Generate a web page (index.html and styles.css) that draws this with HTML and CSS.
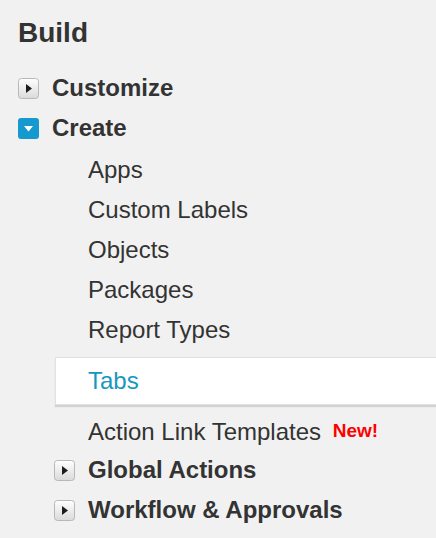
FILE: index.html
```html
<!DOCTYPE html>
<html>
<head>
<meta charset="utf-8">
<link rel="stylesheet" href="styles.css">
</head>
<body>
<div class="nav">
  <h1 class="title">Build</h1>
  <div class="group">
    <div class="head">
      <svg class="tog" viewBox="0 0 21 21" width="21" height="21"><defs><linearGradient id="g1" x1="0" y1="0" x2="0" y2="1"><stop offset="0" stop-color="#ffffff"/><stop offset="1" stop-color="#dadada"/></linearGradient></defs><rect x="0.5" y="0.5" width="20" height="20" rx="3" fill="url(#g1)" stroke="#b8b8b8"/><path d="M8 6 L14 10.5 L8 15 Z" fill="#1e1e1e"/></svg>
      <span>Customize</span>
    </div>
    <div class="head">
      <svg class="tog" viewBox="0 0 21 21" width="21" height="21"><rect x="0" y="0" width="21" height="21" rx="3" fill="#1699cf"/><path d="M6 8 L15 8 L10.5 13.5 Z" fill="#fff"/></svg>
      <span>Create</span>
    </div>
    <ul class="items">
      <li class="item">Apps</li>
      <li class="item">Custom Labels</li>
      <li class="item">Objects</li>
      <li class="item">Packages</li>
      <li class="item">Report Types</li>
      <li class="item selected">Tabs</li>
      <li class="item short">Action Link Templates <span class="new">New!</span></li>
    </ul>
    <div class="head sub">
      <svg class="tog" viewBox="0 0 21 21" width="21" height="21"><defs><linearGradient id="g2" x1="0" y1="0" x2="0" y2="1"><stop offset="0" stop-color="#ffffff"/><stop offset="1" stop-color="#dadada"/></linearGradient></defs><rect x="0.5" y="0.5" width="20" height="20" rx="3" fill="url(#g2)" stroke="#b8b8b8"/><path d="M8 6 L14 10.5 L8 15 Z" fill="#1e1e1e"/></svg>
      <span>Global Actions</span>
    </div>
    <div class="head sub">
      <svg class="tog" viewBox="0 0 21 21" width="21" height="21"><defs><linearGradient id="g3" x1="0" y1="0" x2="0" y2="1"><stop offset="0" stop-color="#ffffff"/><stop offset="1" stop-color="#dadada"/></linearGradient></defs><rect x="0.5" y="0.5" width="20" height="20" rx="3" fill="url(#g3)" stroke="#b8b8b8"/><path d="M8 6 L14 10.5 L8 15 Z" fill="#1e1e1e"/></svg>
      <span>Workflow &amp; Approvals</span>
    </div>
  </div>
</div>
</body>
</html>
```

FILE: styles.css
```css
html, body {
  margin: 0;
  padding: 0;
  background: #f1f1f1;
}
body {
  font-family: "Liberation Sans", Arial, sans-serif;
  color: #333333;
  overflow: hidden;
}
.nav {
  padding: 18px 0 0 18px;
}
.title {
  margin: 0;
  font-size: 28px;
  line-height: 30px;
  font-weight: bold;
  color: #333;
}
.group {
  margin-top: 20px;
}
.head {
  display: flex;
  align-items: center;
  gap: 13px;
  height: 40px;
  font-size: 24px;
  font-weight: bold;
}
.head.sub {
  margin-left: 36px;
}
.tog {
  display: block;
  flex: none;
}
.items {
  list-style: none;
  margin: 2px 0 0 37px;
  padding: 0;
}
.item {
  height: 40px;
  line-height: 40px;
  font-size: 24px;
  padding-left: 33px;
  white-space: nowrap;
}
.item.selected {
  margin: 7px -20px 7px 0;
  height: 46px;
  line-height: 46px;
  padding-left: 32px;
  background: #ffffff;
  color: #1797c0;
  border: 1px solid #e2e2e2;
  box-shadow: 0 2px 1px #d2d2d2;
}
.item.short {
  height: 36px;
  line-height: 36px;
  padding-top: 1px;
  padding-bottom: 1px;
}
.new {
  color: #ff0000;
  font-weight: bold;
  font-size: 19px;
  margin-left: 5px;
  vertical-align: 3px;
}
```
